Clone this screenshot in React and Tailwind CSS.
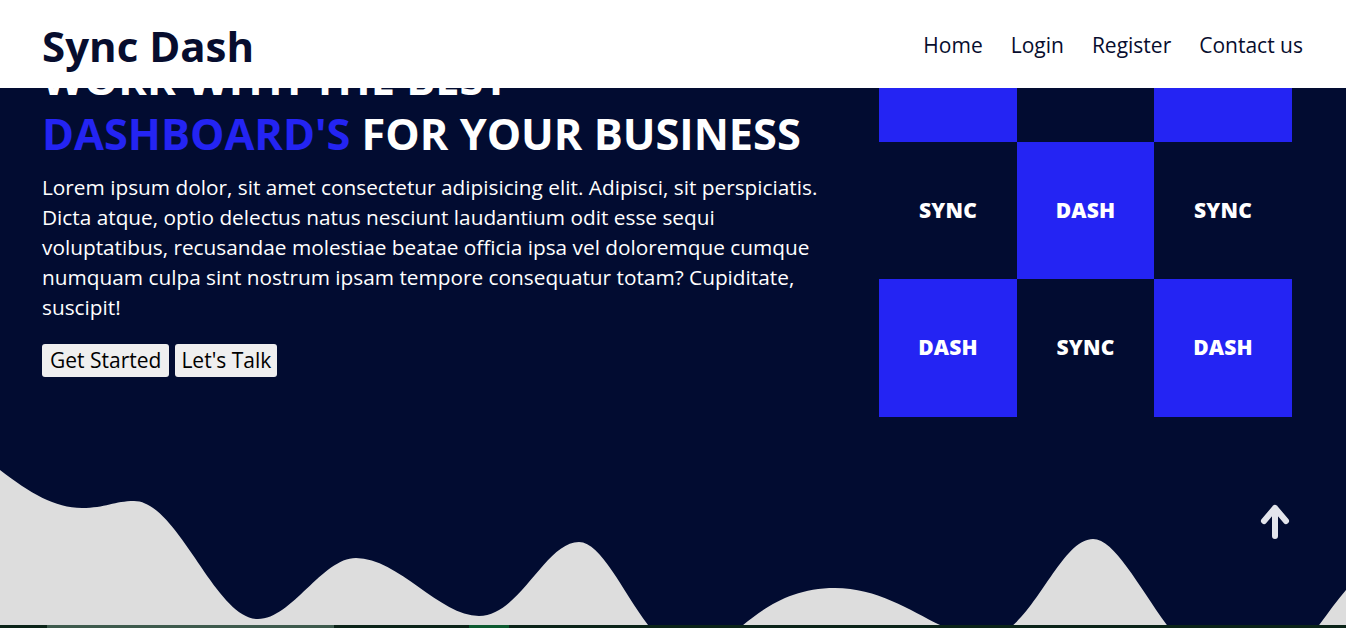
import React from "react";

const NAVY = "bg-[#020c31]";

function Cell({ label, blue }) {
  return (
    <div
      className={`flex items-center justify-center ${blue ? "bg-[#2424f3]" : "bg-[#020c31]"} text-white text-[21px] font-extrabold tracking-[0.2px]`}
    >
      {label}
    </div>
  );
}

function Wave() {
  return (
    <svg
      className="block w-[1346px] h-[185px]"
      viewBox="0 440 1346 185"
      preserveAspectRatio="none"
    >
      <path
        fill="#dddddd"
        d="M0,470 C30,493 55,508 82,508 C105,508 115,501 134,501 C178,501 215,619 258,619 C292,619 322,558 356,558 C398,558 440,616 479,616 C520,616 545,542 579,542 C612,542 645,655 690,655 C730,655 755,588 835,588 C898,588 940,638 985,638 C1030,638 1058,539 1093,539 C1130,539 1175,680 1240,680 C1290,680 1318,622 1346,590 L1346,700 L0,700 Z"
      />
    </svg>
  );
}

export default function App() {
  return (
    <div
      className="relative h-[628px] w-[1346px] overflow-hidden"
      style={{ fontFamily: '"Open Sans", sans-serif' }}
    >
      <header className="fixed top-0 left-0 right-0 z-20 h-[88px] bg-white flex items-center justify-between pl-[42px] pr-[43px]">
        <div className="text-[42px] font-bold leading-[49px] pt-[2px] text-[#070d2e]">
          Sync Dash
        </div>
        <nav className="flex items-center gap-[28px] pt-[3px] text-[21px] leading-[31px] text-[#070d2e]">
          <a>Home</a>
          <a>Login</a>
          <a>Register</a>
          <a>Contact us</a>
        </nav>
      </header>

      <main className={`${NAVY} h-[625px] flex flex-col`}>
        <div className="flex pl-[42px] pr-[54px] pt-[4px]">
          <div className="mt-[47px] w-[800px]">
            <h1 className="text-[43.3px] font-bold leading-[55px] text-white uppercase">
              Work with the best
              <br />
              <span className="text-[#2424f3]">Dashboard's</span> for your business
            </h1>
            <p className="mt-[11px] text-[20.8px] leading-[30px] text-white">
              Lorem ipsum dolor, sit amet consectetur adipisicing elit. Adipisci, sit perspiciatis.
              <br />
              Dicta atque, optio delectus natus nesciunt laudantium odit esse sequi
              <br />
              voluptatibus, recusandae molestiae beatae officia ipsa vel doloremque cumque
              <br />
              numquam culpa sint nostrum ipsam tempore consequatur totam? Cupiditate,
              <br />
              suscipit!
            </p>
            <div className="mt-[22px] flex gap-[6px]">
              <button className="bg-[#efefef] text-black text-[21px] leading-[27px] px-[8px] py-[3px] rounded-[3px]">
                Get Started
              </button>
              <button className="bg-[#efefef] text-black text-[21px] leading-[27px] px-[6px] py-[3px] rounded-[3px]">
                Let's Talk
              </button>
            </div>
          </div>
          <div className="ml-auto grid grid-cols-[138px_137px_138px] grid-rows-[138px_137px_138px] w-[413px] h-[413px]">
            <Cell label="DASH" blue />
            <Cell label="SYNC" />
            <Cell label="DASH" blue />
            <Cell label="SYNC" />
            <Cell label="DASH" blue />
            <Cell label="SYNC" />
            <Cell label="DASH" blue />
            <Cell label="SYNC" />
            <Cell label="DASH" blue />
          </div>
        </div>
        <div className="mt-[23px]">
          <Wave />
        </div>
      </main>

      <div className="flex h-[3px] bg-[#0b2418]">
        <div className="w-[47px]" />
        <div className="w-[287px] bg-[#3e5b4d]" />
        <div className="w-[135px]" />
        <div className="w-[40px] bg-[#0c5a2f]" />
      </div>

      <button className="fixed left-[1259px] top-[503px] z-30 w-[32px] h-[36px]">
        <svg viewBox="0 0 32 36" className="w-[32px] h-[36px]">
          <path
            d="M5 18 L16 5 L27 18 M16 5 L16 33"
            fill="none"
            stroke="#e3e5ec"
            strokeWidth="6"
            strokeLinecap="round"
            strokeLinejoin="round"
          />
        </svg>
      </button>
    </div>
  );
}
